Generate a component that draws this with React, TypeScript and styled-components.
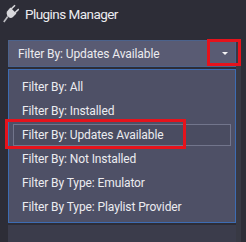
import styled, { createGlobalStyle } from "styled-components";

const colors = {
  page: "#2d2d37",
  text: "#ececf0",
  combo: "#595b73",
  comboBorder: "#4b628c",
  list: "#4e5066",
  listBorder: "#3d6cb3",
  selBorder: "#72758c",
  panel: "#3b3c4b",
  scroll: "#383944",
  red: "#e5131c",
};

const options = [
  "Filter By: All",
  "Filter By: Installed",
  "Filter By: Updates Available",
  "Filter By: Not Installed",
  "Filter By Type: Emulator",
  "Filter By Type: Playlist Provider",
];

const Global = createGlobalStyle`
  html, body {
    margin: 0;
    background: ${colors.page};
  }
  body {
    font-family: Roboto, "Noto Sans", sans-serif;
    color: ${colors.text};
  }
`;

export default function App() {
  const selected = 2;
  return (
    <>
      <Global />
      <Page>
        <TitleBar>
          <PlugIcon />
          <Title>Plugins Manager</Title>
        </TitleBar>

        <Body>
          <Main>
            <Combo>
              <ComboText>{options[selected]}</ComboText>
              <Arrow />
            </Combo>
            <List>
              {options.map((o, i) => (
                <Item key={o} $selected={i === selected}>
                  {o}
                </Item>
              ))}
            </List>
            <Panel />
          </Main>
          <ScrollStrip />
        </Body>

        {/* annotation boxes drawn over the screenshot */}
        <Mark style={{ left: 5, top: 119, width: 181, height: 30 }} />
        <Mark style={{ left: 207, top: 39, width: 34, height: 27 }} />
      </Page>
    </>
  );
}

function PlugIcon() {
  return (
    <svg width="16" height="19" viewBox="0 0 16 19">
      <g fill="#d8d8dc">
        <path d="M7.4 3.6 L13.4 9.6 L10 13 Q7.8 14.8 5.6 13 L4.2 11.6 Q2.6 9.4 4.2 7.2 Z" />
        <rect x="9.3" y="0.4" width="1.6" height="5.4" transform="rotate(45 10.1 3.1)" />
        <rect x="13.1" y="4.2" width="1.6" height="5.4" transform="rotate(45 13.9 6.9)" />
      </g>
      <path d="M4.8 12.6 L0.8 18" stroke="#bdbdc2" strokeWidth="1.7" fill="none" />
    </svg>
  );
}

/* ---------------- Styled Components ---------------- */

const Page = styled.div`
  position: relative;
  width: 246px;
  height: 242px;
  overflow: hidden;
  display: flex;
  flex-direction: column;
`;

const TitleBar = styled.div`
  height: 32px;
  display: flex;
  align-items: center;
  gap: 6px;
  padding-left: 3px;
  box-sizing: border-box;
  padding-bottom: 5px;
`;

const Title = styled.span`
  font-size: 13.5px;
  letter-spacing: -0.55px;
`;

const Body = styled.div`
  flex: 1;
  display: flex;
  padding-top: 8px;
`;

const Main = styled.div`
  margin-left: 8px;
  width: 228px;
  display: flex;
  flex-direction: column;
  gap: 2px;
`;

const ScrollStrip = styled.div`
  width: 5px;
  background: ${colors.scroll};
`;

const Combo = styled.div`
  height: 27px;
  box-sizing: border-box;
  background: ${colors.combo};
  border: 1px solid ${colors.comboBorder};
  display: flex;
  align-items: center;
  justify-content: space-between;
  padding: 0 7px 0 9px;
`;

const ComboText = styled.span`
  font-size: 12px;
  letter-spacing: -0.1px;
`;

const Arrow = styled.span`
  width: 0;
  height: 0;
  border-left: 3.5px solid transparent;
  border-right: 3.5px solid transparent;
  border-top: 3.5px solid #f4f4f6;
`;

const List = styled.div`
  box-sizing: border-box;
  height: 154px;
  background: ${colors.list};
  border: 1px solid ${colors.listBorder};
  padding: 6px 4px 4px;
  display: flex;
  flex-direction: column;
  gap: 2px;
`;

const Item = styled.div<{ $selected: boolean }>`
  height: 22px;
  box-sizing: border-box;
  display: flex;
  align-items: center;
  padding-left: 8px;
  font-size: 12px;
  letter-spacing: -0.1px;
  border: 1px solid ${({ $selected }) => ($selected ? colors.selBorder : "transparent")};
  background: ${({ $selected }) => ($selected ? "#4a4c61" : "transparent")};
`;

const Panel = styled.div`
  flex: 1;
  background: ${colors.panel};
`;

const Mark = styled.div`
  position: absolute;
  box-sizing: border-box;
  border: 3px solid ${colors.red};
  pointer-events: none;
`;
